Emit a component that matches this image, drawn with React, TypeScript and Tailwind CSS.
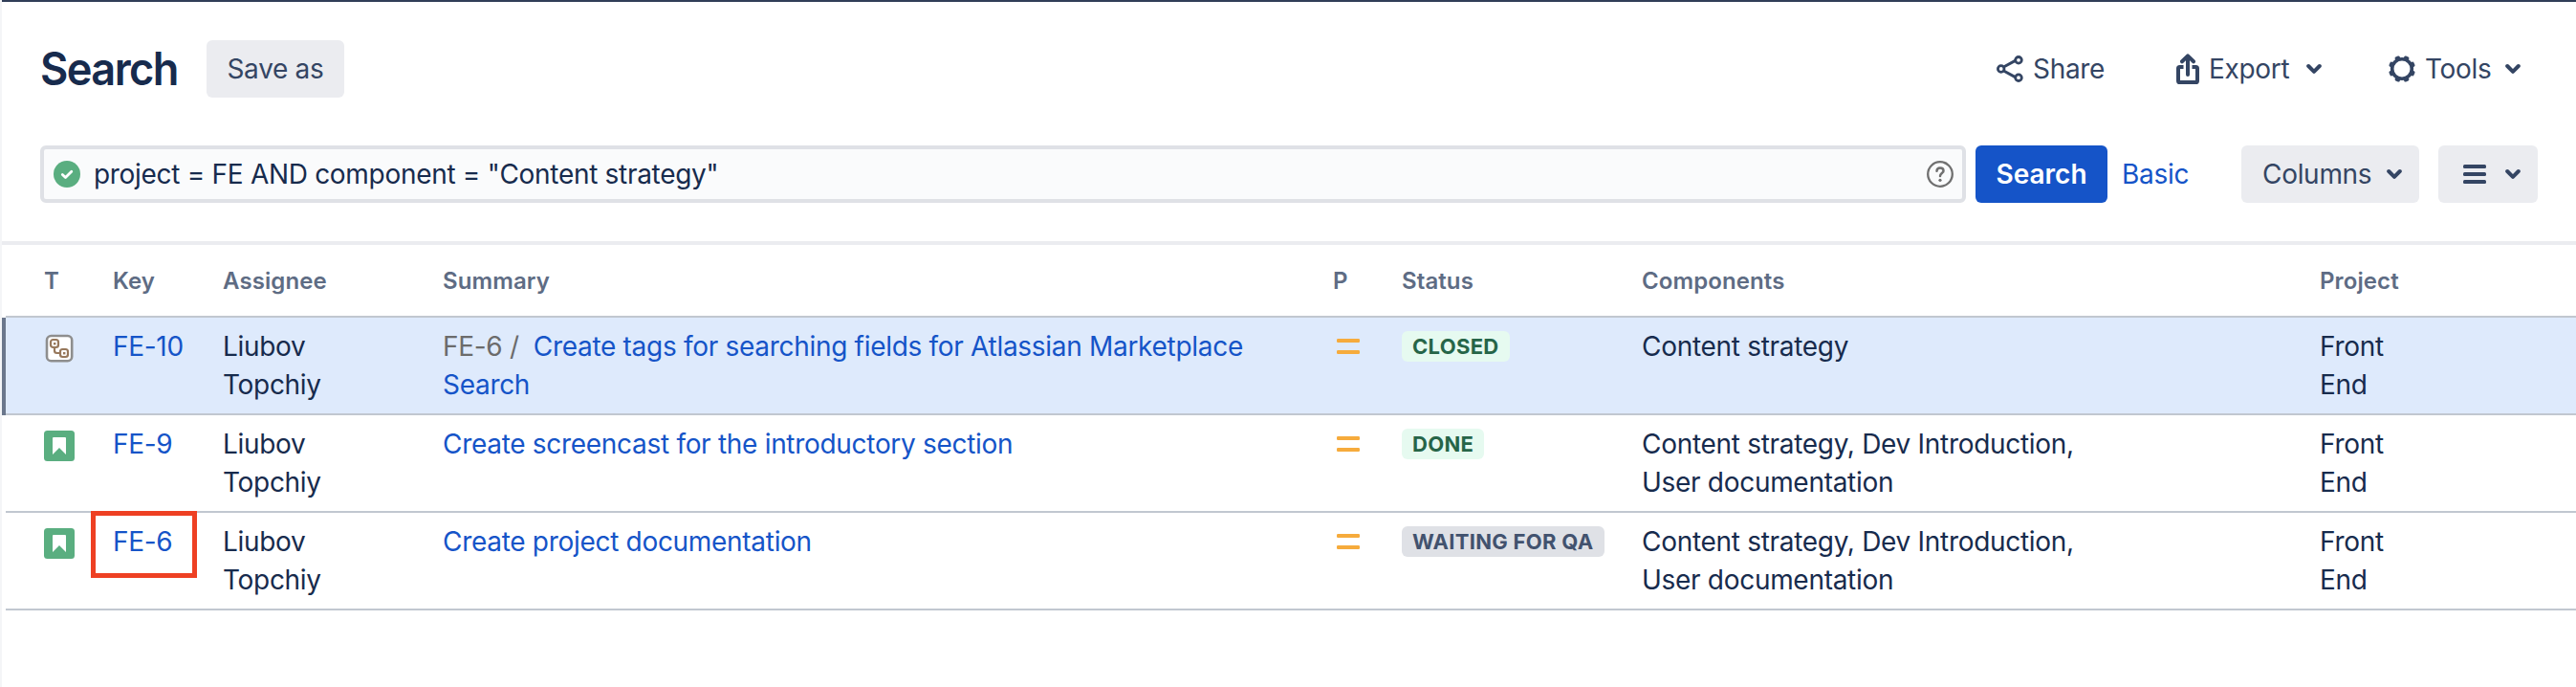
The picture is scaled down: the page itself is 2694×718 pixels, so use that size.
import type { ReactNode } from "react";

type Status = {
  label: string;
  tone: "success" | "default";
};

type Issue = {
  key: string;
  type: "subtask" | "story";
  assignee: string[];
  parent?: string;
  summary: string;
  status: Status;
  components: string;
  project: string[];
  selected?: boolean;
  highlighted?: boolean;
};

const issues: Issue[] = [
  {
    key: "FE-10",
    type: "subtask",
    assignee: ["Liubov", "Topchiy"],
    parent: "FE-6",
    summary: "Create tags for searching fields for Atlassian Marketplace Search",
    status: { label: "Closed", tone: "success" },
    components: "Content strategy",
    project: ["Front", "End"],
    selected: true,
  },
  {
    key: "FE-9",
    type: "story",
    assignee: ["Liubov", "Topchiy"],
    summary: "Create screencast for the introductory section",
    status: { label: "Done", tone: "success" },
    components: "Content strategy, Dev Introduction, User documentation",
    project: ["Front", "End"],
  },
  {
    key: "FE-6",
    type: "story",
    assignee: ["Liubov", "Topchiy"],
    summary: "Create project documentation",
    status: { label: "Waiting for QA", tone: "default" },
    components: "Content strategy, Dev Introduction, User documentation",
    project: ["Front", "End"],
    highlighted: true,
  },
];

const headings = ["T", "Key", "Assignee", "Summary", "P", "Status", "Components", "Project"];

function statusStyles(tone: Status["tone"]) {
  switch (tone) {
    case "success":
      return "bg-[#e6faf0] text-[#266548]";
    default:
      return "bg-[#dfe1e6] text-[#42526e]";
  }
}

function ShareIcon() {
  return (
    <svg className="size-7" viewBox="0 0 28 28" fill="none" stroke="currentColor" strokeWidth="2.8">
      <path d="M7 12.2 19.6 5.4M7 15.8l12.6 6.8" strokeWidth="3" />
      <circle cx="4.7" cy="14" r="3.3" />
      <circle cx="23" cy="4.8" r="3.3" />
      <circle cx="23" cy="23.2" r="3.3" />
    </svg>
  );
}

function ExportIcon() {
  return (
    <svg className="h-8 w-6" viewBox="0 0 24 32" fill="none" stroke="currentColor" strokeWidth="4">
      <path d="M7.5 14H3.6A1.6 1.6 0 0 0 2 15.6v12.8A1.6 1.6 0 0 0 3.6 30h16.8a1.6 1.6 0 0 0 1.6-1.6V15.6a1.6 1.6 0 0 0-1.6-1.6h-3.9" />
      <path d="M12 5v17" strokeLinecap="round" />
      <path d="M6 8.3 12 2.4l6 5.9" strokeLinecap="round" strokeLinejoin="round" />
    </svg>
  );
}

function GearIcon() {
  const teeth = [22.5, 67.5, 112.5, 157.5, 202.5, 247.5, 292.5, 337.5];

  return (
    <svg className="size-7" viewBox="0 0 28 28" fill="currentColor">
      <circle cx="14" cy="14" r="10.3" fill="none" stroke="currentColor" strokeWidth="3.6" />
      {teeth.map((angle) => (
        <rect key={angle} x="11.3" y="0" width="5.4" height="4.5" rx="1.4" transform={`rotate(${angle} 14 14)`} />
      ))}
    </svg>
  );
}

function ChevronIcon() {
  return (
    <svg className="h-4 w-4" viewBox="0 0 16 16" fill="none" stroke="currentColor" strokeWidth="4" strokeLinecap="round" strokeLinejoin="round">
      <path d="M2.2 5 8 10.8 13.8 5" />
    </svg>
  );
}

function ListIcon() {
  return (
    <svg className="h-5 w-6" viewBox="0 0 24 20" fill="currentColor">
      <rect width="24" height="4" rx="1.5" />
      <rect y="8" width="24" height="4" rx="1.5" />
      <rect y="16" width="24" height="4" rx="1.5" />
    </svg>
  );
}

function ValidIcon() {
  return (
    <svg className="size-7" viewBox="0 0 28 28" fill="none">
      <circle cx="14" cy="14" r="14" fill="#5aae80" />
      <path d="m9.3 14.5 3.2 3 6.3-6.3" stroke="white" strokeWidth="2.8" strokeLinecap="round" strokeLinejoin="round" />
    </svg>
  );
}

function HelpIcon() {
  return (
    <svg className="size-7" viewBox="0 0 28 28" fill="none" stroke="#707070" strokeLinecap="round">
      <circle cx="14" cy="14" r="12.8" strokeWidth="2.3" />
      <path d="M10.5 10.8c.1-2.200 1.600-3.400 3.500-3.400s3.500 1.200 3.500 3c0 2.600-3.500 2.700-3.500 5.600" strokeWidth="2.5" />
      <circle cx="14" cy="20.3" r="1.6" fill="#707070" stroke="none" />
    </svg>
  );
}

function IssueTypeIcon({ type }: { type: Issue["type"] }) {
  if (type === "story") {
    return (
      <svg className="size-8" viewBox="0 0 32 32">
        <rect width="32" height="32" rx="3.5" fill="#5aae80" />
        <path d="M9 8a1 1 0 0 1 1-1h12a1 1 0 0 1 1 1v17l-7-7-7 7z" fill="white" />
      </svg>
    );
  }

  return (
    <svg className="size-8" viewBox="0 0 32 32" fill="none">
      <rect x="3" y="3" width="26.2" height="26.2" rx="4.5" fill="white" stroke="#8e8e8e" strokeWidth="2.6" />
      <path d="M11 15v3.5q0 2.500 2.500 2.500H16" stroke="#97785c" strokeWidth="2.2" />
      <rect x="7" y="7" width="8" height="8" rx="2.5" stroke="#97785c" strokeWidth="2.2" />
      <rect x="17" y="17" width="8" height="8" rx="2.5" stroke="#97785c" strokeWidth="2.2" />
      <rect x="10" y="10" width="2.4" height="2.4" fill="#97785c" />
      <rect x="20" y="20" width="2.4" height="2.4" fill="#97785c" />
    </svg>
  );
}

function PriorityIcon() {
  return (
    <svg className="h-4 w-6" viewBox="0 0 24 16" fill="#f6ab3c">
      <rect width="24" height="4" rx="1.2" />
      <rect y="12" width="24" height="4" rx="1.2" />
    </svg>
  );
}

function ToolbarLink({ icon, label, menu }: { icon: ReactNode; label: string; menu?: boolean }) {
  return (
    <button type="button" className="flex items-center">
      {icon}
      <span className="ml-2.5">{label}</span>
      {menu && (
        <span className="ml-auto">
          <ChevronIcon />
        </span>
      )}
    </button>
  );
}

export default function App() {
  return (
    <div className="h-[718px] w-[2694px] overflow-hidden border-l-2 border-[#f4f5f7] bg-white font-['Inter',sans-serif] text-[28px] leading-10 tracking-[-0.3px] text-[#172b4d]">
      <div className="h-0.5 bg-[#303e58]" />

      <header className="mt-10 flex h-[60px] items-center pl-10 pr-[58px] text-[#344563]">
        <h1 className="w-[174px] origin-left scale-x-[0.94] text-[48px] font-semibold leading-[60px] tracking-[-0.035em] text-[#172b4d]">
          Search
        </h1>
        <button type="button" className="h-[60px] w-36 rounded-md bg-[#ebecf0]">
          Save as
        </button>

        <div className="ml-auto grid grid-cols-[188px_222px_138px]">
          <ToolbarLink icon={<ShareIcon />} label="Share" />
          <div className="mr-[70px] grid">
            <ToolbarLink icon={<ExportIcon />} label="Export" menu />
          </div>
          <ToolbarLink icon={<GearIcon />} label="Tools" menu />
        </div>
      </header>

      <section className="mt-[50px] flex h-[60px] items-center px-10">
        <div className="flex h-[60px] w-[2014px] items-center rounded-md border-4 border-[#dfe1e6] bg-[#fafbfc] pl-2.5 pr-[9px]">
          <ValidIcon />
          <span className="ml-3.5">project = FE AND component = "Content strategy"</span>
          <span className="ml-auto">
            <HelpIcon />
          </span>
        </div>
        <button type="button" className="ml-2.5 h-[60px] w-[138px] rounded-md bg-[#1554c8] font-semibold tracking-normal text-white">
          Search
        </button>
        <a className="ml-[15px] text-[#1554c8]">Basic</a>
        <button
          type="button"
          className="ml-auto flex h-[60px] w-[186px] items-center justify-between rounded-md bg-[#ebecf0] pl-[22px] pr-[18px] text-[#344563]"
        >
          Columns
          <ChevronIcon />
        </button>
        <button
          type="button"
          className="ml-5 flex h-[60px] w-[104px] items-center justify-between rounded-md bg-[#ebecf0] pl-[26px] pr-[18px] text-[#344563]"
        >
          <ListIcon />
          <ChevronIcon />
        </button>
      </section>

      <div className="mt-10 h-1 bg-[#ebecf0]" />

      <table className="w-full table-fixed border-separate border-spacing-0 text-left">
        <colgroup>
          <col className="w-1" />
          <col className="w-28" />
          <col className="w-[115px]" />
          <col className="w-[230px]" />
          <col className="w-[931px]" />
          <col className="w-[72px]" />
          <col className="w-[251px]" />
          <col className="w-[709px]" />
          <col />
        </colgroup>
        <thead>
          <tr className="h-[76px] text-2xl tracking-[0.1px] text-[#5e6c84]">
            <th />
            {headings.map((heading, i) => (
              <th
                key={heading}
                className={`border-b-2 border-[#c1c7d0] p-0 pt-0.5 font-semibold ${i === 0 ? "pl-10" : ""}`}
              >
                {heading}
              </th>
            ))}
          </tr>
        </thead>
        <tbody>
          {issues.map((issue) => (
            <tr
              key={issue.key}
              className={`h-[102px] align-top *:border-[#c1c7d0] *:pt-2.5 *:not-first:border-b-2 ${
                issue.selected ? "bg-[#deeafc]" : ""
              }`}
            >
              <td className={issue.selected ? "bg-[#6b778c]" : ""} />
              <td className="pl-10">
                <div className="pt-1.5">
                  <IssueTypeIcon type={issue.type} />
                </div>
              </td>
              <td className="relative text-[#1554c8]">
                {issue.highlighted && (
                  <span className="absolute -left-[23px] -top-0.5 h-[70px] w-[111px] border-[5px] border-[#ee4023]" />
                )}
                {issue.key}
              </td>
              <td>
                {issue.assignee.map((part) => (
                  <div key={part}>{part}</div>
                ))}
              </td>
              <td className="pr-8 text-[#1554c8]">
                {issue.parent && <span className="mr-[15px] text-[#6b6b6b]">{issue.parent} /</span>}
                {issue.summary}
              </td>
              <td>
                <div className="pl-1 pt-3">
                  <PriorityIcon />
                </div>
              </td>
              <td>
                <span
                  className={`mt-1 inline-block h-8 rounded-md px-[11px] align-top text-[22px] font-bold uppercase leading-8 tracking-[0.3px] ${statusStyles(
                    issue.status.tone
                  )}`}
                >
                  {issue.status.label}
                </span>
              </td>
              <td className="pr-48">{issue.components}</td>
              <td>
                {issue.project.map((part) => (
                  <div key={part}>{part}</div>
                ))}
              </td>
            </tr>
          ))}
        </tbody>
      </table>
    </div>
  );
}
